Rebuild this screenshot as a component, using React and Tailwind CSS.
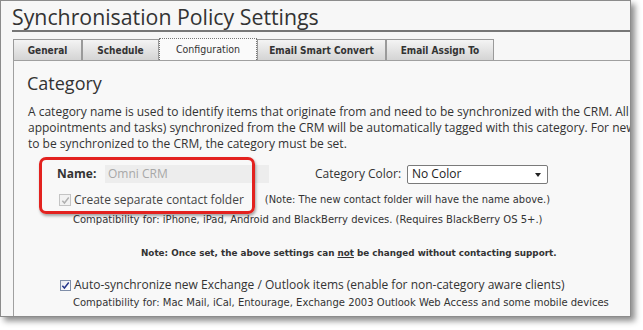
const tabs = [
  { label: 'General', w: 'w-[69px]' },
  { label: 'Schedule', w: 'w-[77px]' },
  { label: 'Configuration', w: 'w-[98px]', active: true },
  { label: 'Email Smart Convert', w: 'w-[129px]' },
  { label: 'Email Assign To', w: 'w-[108px]' },
]

const verdana = "font-['DejaVu_Sans',Verdana,sans-serif]"
const segoe = "font-['Open_Sans','Noto_Sans',sans-serif]"

const Check = ({ color }) => (
  <svg viewBox="0 0 10 10" className="w-[9px] h-[9px]">
    <path d="M1.5 5.2 L3.8 7.8 L8.6 1.6" fill="none" stroke={color} strokeWidth="1.6" />
  </svg>
)

export default function App() {
  return (
    <div className="w-[643px] h-[330px] bg-white">
      <div className={`relative w-[631px] h-[317px] border border-[#8c8c8c] bg-[#f7f7f7] shadow-[4px_4px_6px_rgba(0,0,0,0.45)] overflow-hidden text-[#333] ${segoe}`}>
        <h1 className="pl-[11px] pt-[3px] h-[29px] text-[21.3px] leading-[26px] text-[#333]">
          Synchronisation Policy Settings
        </h1>
        <div className="ml-[11px] border-b-2 border-[#777]" />

        <div className="flex items-end ml-[12px] mt-[6px] h-[22px]">
          {tabs.map((t) => (
            <div
              key={t.label}
              className={`${t.w} flex items-center justify-center border border-b-0 font-['DejaVu_Sans_Condensed','DejaVu_Sans',sans-serif] text-[#333] ${
                t.active
                  ? 'h-[22px] text-[10.5px] bg-[#fafafa] border-dotted border-[#777] outline outline-1 -outline-offset-2 outline-[#fafafa]'
                  : 'h-[21px] text-[10px] font-bold bg-gradient-to-b from-[#f4f4f4] to-[#d4d4d4] border-[#9a9a9a]'
              }`}
            >
              {t.label}
            </div>
          ))}
        </div>

        <div className="ml-[12px] border-t border-l border-[#a0a0a0] bg-[#f8f8f8] h-[260px]">
          <h2 className="pl-[13px] pt-[11px] text-[18px] leading-[22px]">Category</h2>

          <div className="pl-[14px] mt-[10px] text-[12px] leading-[16px] whitespace-nowrap">
            <p>A category name is used to identify items that originate from and need to be synchronized with the CRM. All items (contacts,</p>
            <p>appointments and tasks) synchronized from the CRM will be automatically tagged with this category. For new items</p>
            <p>to be synchronized to the CRM, the category must be set.</p>
          </div>

          <div className="relative">
            <div className="flex items-center h-[20px] mt-[12px] text-[12px]">
              <span className="ml-[43px] w-[48px] font-bold">Name:</span>
              <div className="w-[164px] h-[18px] bg-[#ededed] flex items-center pl-[3px] text-[#a8a8a8]">Omni CRM</div>
              <span className="ml-[46px] w-[92px]">Category Color:</span>
              <div className="relative w-[141px] h-[19px] bg-white border border-[#7a7a7a] rounded-[2px] flex items-center pl-[4px] text-[#222]">
                No Color
                <span className="absolute right-[6px] top-[7px] w-0 h-0 border-l-[3.5px] border-r-[3.5px] border-t-[4px] border-l-transparent border-r-transparent border-t-[#222]" />
              </div>
            </div>

            <div className="flex items-center h-[16px] mt-[8px] whitespace-nowrap">
              <span className="ml-[45px] w-[12px] h-[12px] border border-[#c4c4c4] bg-[#f2f2f2] flex items-center justify-center">
                <Check color="#b0b0b0" />
              </span>
              <span className="ml-[3px] text-[12px] text-[#444]">Create separate contact folder</span>
              <span className={`ml-[21px] text-[9.9px] ${verdana}`}>(Note: The new contact folder will have the name above.)</span>
            </div>

            <p className={`ml-[59px] mt-[5px] h-[14px] leading-[14px] text-[10px] whitespace-nowrap ${verdana}`}>
              Compatibility for: iPhone, iPad, Android and BlackBerry devices. (Requires BlackBerry OS 5+.)
            </p>

            <div className="absolute left-[25px] top-[-7px] w-[216px] h-[57px] border-[3px] border-[#e3221f] rounded-[7px] shadow-[1px_2px_3px_rgba(0,0,0,0.35)]" />
          </div>

          <p className={`ml-[127px] mt-[19px] h-[14px] leading-[14px] text-[8.8px] font-bold whitespace-nowrap ${verdana}`}>
            Note: Once set, the above settings can <span className="underline">not</span> be changed without contacting support.
          </p>

          <div className="flex items-center h-[16px] mt-[17px] whitespace-nowrap">
            <span className="ml-[46px] w-[11px] h-[11px] border border-[#7f8ea8] bg-gradient-to-br from-[#e8eaf0] to-white flex items-center justify-center">
              <Check color="#24358a" />
            </span>
            <span className="ml-[3px] text-[12px]">Auto-synchronize new Exchange / Outlook items (enable for non-category aware clients)</span>
          </div>

          <p className={`ml-[59px] mt-[3px] h-[14px] leading-[14px] text-[10px] whitespace-nowrap ${verdana}`}>
            Compatibility for: Mac Mail, iCal, Entourage, Exchange 2003 Outlook Web Access and some mobile devices
          </p>
        </div>
      </div>
    </div>
  )
}
